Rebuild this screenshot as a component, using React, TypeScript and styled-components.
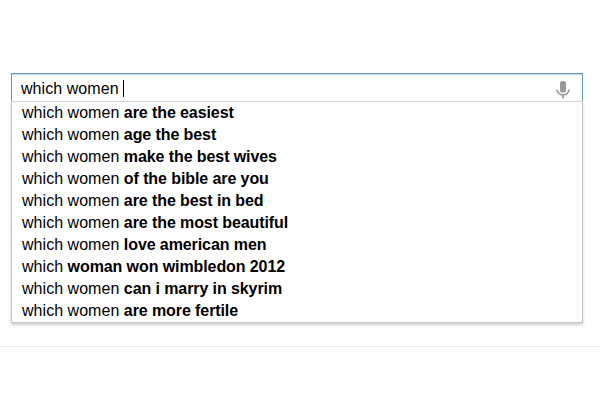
import React from "react";
import styled, { createGlobalStyle } from "styled-components";

const GlobalStyle = createGlobalStyle`
  body {
    margin: 0;
    background: #fff;
    overflow: hidden;
  }
`;

const Page = styled.main`
  box-sizing: border-box;
  width: 600px;
  height: 400px;
  padding-top: 73px;
  background: #fff;
  color: #000;
  font: 16px/22px "Liberation Sans", Arial, sans-serif;
`;

const SearchBox = styled.section`
  width: 572px;
  margin-left: 11px;
`;

const Field = styled.div`
  box-sizing: border-box;
  display: flex;
  align-items: center;
  height: 28px;
  padding: 2px 12px 0 9px;
  border: 1px solid #6595c2;
  border-bottom: 0;
  box-shadow: inset 0 1px 0 #c5d9ec;
`;

const Query = styled.span`
  width: 102px;
  white-space: pre;
  letter-spacing: 0.06px;
`;

const Caret = styled.span`
  width: 1px;
  height: 17px;
  background: #000;
`;

const Mic = styled.svg`
  width: 14px;
  height: 19px;
  margin: 2px 0 0 auto;
`;

const Suggestions = styled.ul`
  box-sizing: border-box;
  height: 222px;
  margin: 0;
  padding: 0;
  list-style: none;
  border: 1px solid #c8c8c8;
  border-top-color: #d4d6d8;
  box-shadow: 0 2px 3px rgba(0, 0, 0, 0.2);
`;

const Suggestion = styled.li`
  height: 22px;
  padding-left: 10px;
  white-space: pre;
  letter-spacing: 0.04px;
`;

const Completion = styled.b`
  letter-spacing: -0.09px;
`;

const Divider = styled.div`
  height: 1px;
  margin-top: 23px;
  background: #e8e8e8;
`;

const suggestions: [string, string][] = [
  ["which women ", "are the easiest"],
  ["which women ", "age the best"],
  ["which women ", "make the best wives"],
  ["which women ", "of the bible are you"],
  ["which women ", "are the best in bed"],
  ["which women ", "are the most beautiful"],
  ["which women ", "love american men"],
  ["which ", "woman won wimbledon 2012"],
  ["which women ", "can i marry in skyrim"],
  ["which women ", "are more fertile"],
];

export default function App() {
  return (
    <Page>
      <GlobalStyle />
      <SearchBox>
        <Field>
          <Query>{"which women "}</Query>
          <Caret />
          <Mic viewBox="0 0 14 19" aria-label="Voice search">
            <rect x="4" y="1" width="6" height="11.5" rx="2.6" fill="#999" />
            <path
              d="M1 9.500c.4 3.300 2.600 5.300 6 5.300s5.600-2 6-5.300M7 14.800V18.500"
              fill="none"
              stroke="#999"
              strokeWidth="1.700"
            />
          </Mic>
        </Field>
        <Suggestions>
          {suggestions.map(([typed, completion]) => (
            <Suggestion key={completion}>
              {typed}
              <Completion>{completion}</Completion>
            </Suggestion>
          ))}
        </Suggestions>
      </SearchBox>
      <Divider />
    </Page>
  );
}
